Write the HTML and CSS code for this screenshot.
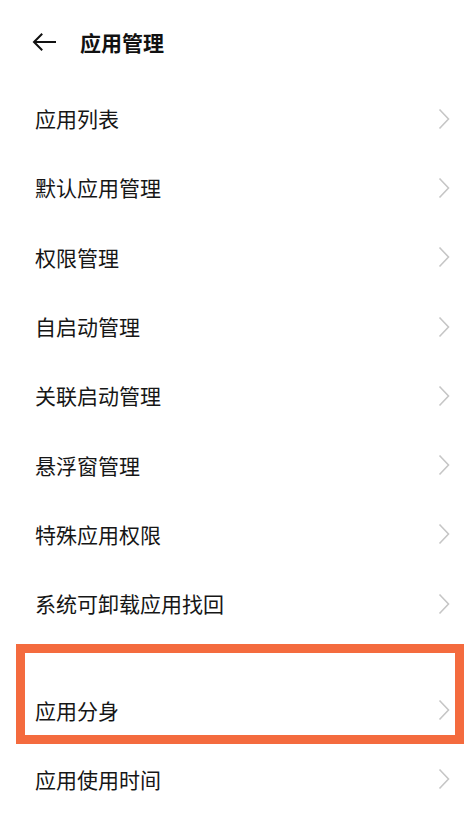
FILE: index.html
```html
<!DOCTYPE html>
<html lang="zh-CN">
<head>
<meta charset="utf-8">
<title>应用管理</title>
<link rel="stylesheet" href="styles.css">
</head>
<body>
<div class="page">
  <header class="topbar">
    <svg class="back" width="24" height="18" viewBox="0 0 24 18" aria-hidden="true">
      <path d="M23 9H2.5M9.5 1.5L2 9l7.5 7.5" fill="none" stroke="#111" stroke-width="2" stroke-linecap="square" stroke-linejoin="miter"/>
    </svg>
    <h1 class="title">应用管理</h1>
  </header>
  <ul class="list">
    <li class="row"><span class="label">应用列表</span><svg class="chev" width="12" height="22" viewBox="0 0 12 22"><path d="M1.5 1.5L10.5 11L1.5 20.5" fill="none" stroke="#c6c6c6" stroke-width="1.6"/></svg></li>
    <li class="row"><span class="label">默认应用管理</span><svg class="chev" width="12" height="22" viewBox="0 0 12 22"><path d="M1.5 1.5L10.5 11L1.5 20.5" fill="none" stroke="#c6c6c6" stroke-width="1.6"/></svg></li>
    <li class="row"><span class="label">权限管理</span><svg class="chev" width="12" height="22" viewBox="0 0 12 22"><path d="M1.5 1.5L10.5 11L1.5 20.5" fill="none" stroke="#c6c6c6" stroke-width="1.6"/></svg></li>
    <li class="row"><span class="label">自启动管理</span><svg class="chev" width="12" height="22" viewBox="0 0 12 22"><path d="M1.5 1.5L10.5 11L1.5 20.5" fill="none" stroke="#c6c6c6" stroke-width="1.6"/></svg></li>
    <li class="row"><span class="label">关联启动管理</span><svg class="chev" width="12" height="22" viewBox="0 0 12 22"><path d="M1.5 1.5L10.5 11L1.5 20.5" fill="none" stroke="#c6c6c6" stroke-width="1.6"/></svg></li>
    <li class="row"><span class="label">悬浮窗管理</span><svg class="chev" width="12" height="22" viewBox="0 0 12 22"><path d="M1.5 1.5L10.5 11L1.5 20.5" fill="none" stroke="#c6c6c6" stroke-width="1.6"/></svg></li>
    <li class="row"><span class="label">特殊应用权限</span><svg class="chev" width="12" height="22" viewBox="0 0 12 22"><path d="M1.5 1.5L10.5 11L1.5 20.5" fill="none" stroke="#c6c6c6" stroke-width="1.6"/></svg></li>
    <li class="row"><span class="label">系统可卸载应用找回</span><svg class="chev" width="12" height="22" viewBox="0 0 12 22"><path d="M1.5 1.5L10.5 11L1.5 20.5" fill="none" stroke="#c6c6c6" stroke-width="1.6"/></svg></li>
  </ul>
  <div class="highlight">
    <div class="row row-inner"><span class="label">应用分身</span><svg class="chev" width="12" height="22" viewBox="0 0 12 22"><path d="M1.5 1.5L10.5 11L1.5 20.5" fill="none" stroke="#c6c6c6" stroke-width="1.6"/></svg></div>
  </div>
  <ul class="list">
    <li class="row"><span class="label">应用使用时间</span><svg class="chev" width="12" height="22" viewBox="0 0 12 22"><path d="M1.5 1.5L10.5 11L1.5 20.5" fill="none" stroke="#c6c6c6" stroke-width="1.6"/></svg></li>
  </ul>
</div>
</body>
</html>
```
FILE: styles.css
```css
html, body {
  margin: 0;
  padding: 0;
  background: #ffffff;
}
body {
  font-family: "Noto Sans CJK SC", "Noto Sans", sans-serif;
  color: #161616;
  overflow: hidden;
}
.page {
  width: 468px;
}
.topbar {
  height: 84px;
  display: flex;
  align-items: center;
  padding-left: 32px;
  box-sizing: border-box;
}
.back {
  display: block;
  flex: none;
}
.title {
  margin: 0 0 0 24px;
  font-size: 21px;
  line-height: 1;
  font-weight: 700;
  color: #111;
}
.list {
  list-style: none;
  margin: 0;
  padding: 0;
}
.row {
  height: 69.3px;
  display: flex;
  align-items: center;
  justify-content: space-between;
  padding: 0 18px 0 35px;
  box-sizing: border-box;
}
.label {
  font-size: 21px;
  line-height: 1;
}
.chev {
  display: block;
  flex: none;
}
.highlight {
  margin: 6px 4px 0 16px;
  border: 9px solid #f46b3e;
  padding-top: 32px;
}
.row.row-inner {
  height: 50px;
  padding: 0 5px 0 10px;
}
```
